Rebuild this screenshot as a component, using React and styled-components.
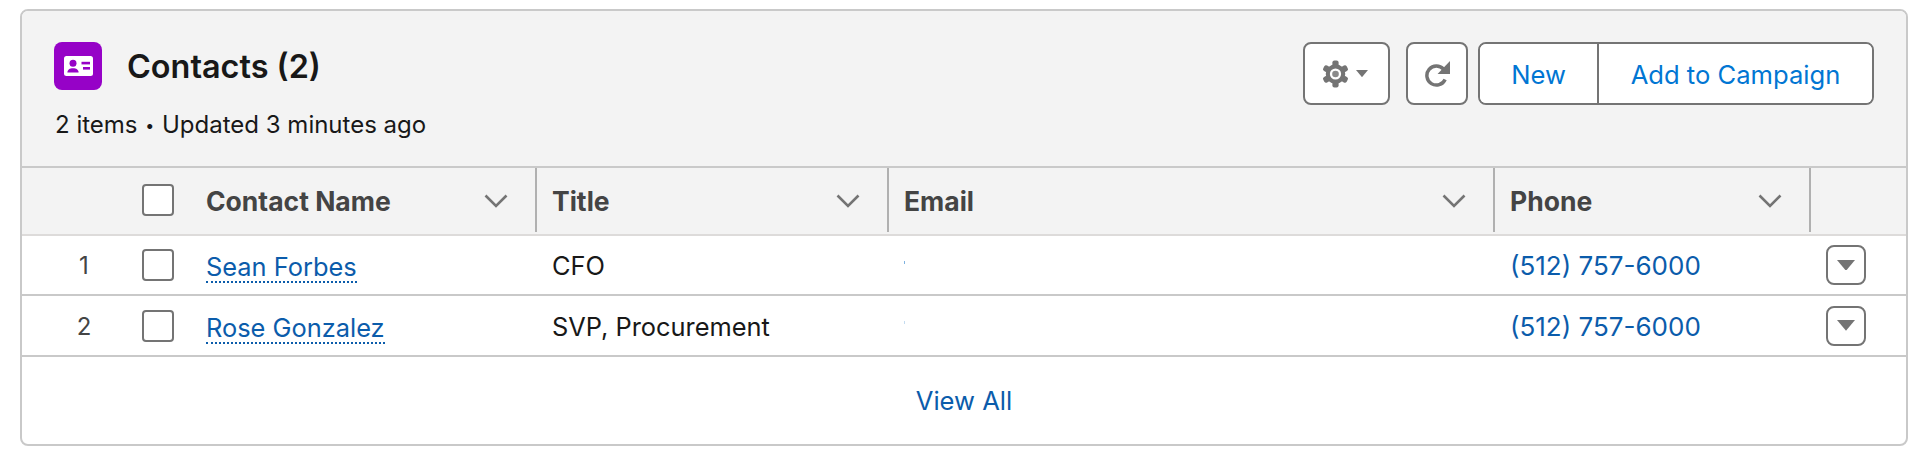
import React from "react";
import styled, { createGlobalStyle } from "styled-components";

const GlobalStyle = createGlobalStyle`
  html, body {
    margin: 0;
    padding: 0;
    background: #fff;
    font-family: Inter, "Liberation Sans", sans-serif;
    color: #181818;
  }
  * { box-sizing: border-box; }
`;

const COLUMNS = "120px 64px 331px 352px 606px 316px 1fr";

const Card = styled.div`
  margin: 9px 14px 0 20px;
  width: 1888px;
  height: 437px;
  border: 2px solid #c9c9c9;
  border-radius: 8px;
  overflow: hidden;
  background: #fff;
  display: flex;
  flex-direction: column;
`;

const CardHeader = styled.header`
  height: 157px;
  flex: none;
  background: #f3f3f3;
  border-bottom: 2px solid #c9c9c9;
  padding: 31px 32px 0 32px;
  display: flex;
  justify-content: space-between;
  align-items: flex-start;
`;

const HeadingBlock = styled.div`
  display: flex;
  flex-direction: column;
`;

const TitleRow = styled.div`
  display: flex;
  align-items: center;
  gap: 25px;
`;

const ObjectIcon = styled.span`
  width: 48px;
  height: 48px;
  border-radius: 8px;
  background: #9602c7;
  display: flex;
  align-items: center;
  justify-content: center;
`;

const Title = styled.h2`
  margin: 2px 0 0;
  font-size: 32.4px;
  line-height: 38px;
  font-weight: 600;
  color: #181818;
`;

const Meta = styled.p`
  margin: 20px 0 0 1px;
  font-size: 24px;
  line-height: 30px;
  font-weight: 400;
  color: #181818;
`;

const MetaDot = styled.span`
  font-size: 16px;
  margin: 0 1px;
  vertical-align: 2px;
`;

const Actions = styled.div`
  display: flex;
  align-items: center;
`;

const IconButton = styled.button`
  height: 63px;
  width: ${(p) => p.$width}px;
  margin-right: ${(p) => p.$gap}px;
  border: 2px solid #747474;
  border-radius: 8px;
  background: #fff;
  padding: 0 ${(p) => p.$padEnd || 0}px 0 0;
  display: flex;
  align-items: center;
  justify-content: center;
  gap: 7px;
  color: #747474;
`;

const ButtonGroup = styled.div`
  display: flex;
  height: 63px;
  border: 2px solid #747474;
  border-radius: 8px;
  background: #fff;
  overflow: hidden;
`;

const GroupButton = styled.button`
  width: ${(p) => p.$width}px;
  border: 0;
  border-left: ${(p) => (p.$divided ? "2px solid #747474" : "0")};
  background: #fff;
  padding: 2px 0 0;
  font-family: inherit;
  font-size: 25.6px;
  font-weight: 400;
  color: #0176d3;
`;

const HeadRow = styled.div`
  display: grid;
  grid-template-columns: ${COLUMNS};
  height: 68px;
  flex: none;
  background: #f3f3f3;
  border-bottom: 2px solid #dddbda;
`;

const HeadCell = styled.div`
  display: flex;
  align-items: center;
  justify-content: space-between;
  height: 64px;
  padding: 2px 27px 0 ${(p) => p.$pad}px;
  border-right: 2px solid #b0b0b0;
  font-size: 26.5px;
  font-weight: 700;
  color: #444444;
`;

const HeadSlot = styled.div`
  display: flex;
  align-items: center;
  height: 64px;
`;

const Row = styled.div`
  display: grid;
  grid-template-columns: ${COLUMNS};
  height: ${(p) => p.$height}px;
  flex: none;
  border-bottom: 2px solid #c9c9c9;
  align-items: center;
`;

const RowNumber = styled.div`
  text-align: center;
  padding: 1px 0 0 4px;
  font-size: 24px;
  color: #444444;
`;

const Checkbox = styled.span`
  display: block;
  width: 32px;
  height: 32px;
  border: 2px solid #747474;
  border-radius: 4px;
  background: #fff;
`;

const NameCell = styled.div`
  display: flex;
  margin-top: 6px;
`;

const NameLink = styled.a`
  color: #0b5cab;
  font-size: 25.4px;
  line-height: 28px;
  text-decoration: none;
  border-bottom: 2px dotted #0b5cab;
`;

const TextCell = styled.div`
  padding: 1px 0 0 ${(p) => p.$pad}px;
  font-size: ${(p) => p.$size}px;
  color: ${(p) => p.$color};
`;

const Speck = styled.span`
  display: block;
  width: 1px;
  height: 3px;
  margin: 0 0 6px 15px;
  background: ${(p) => p.$color};
`;

const RowMenu = styled.button`
  width: 40px;
  height: 40px;
  margin-left: 15px;
  border: 2px solid #747474;
  border-radius: 8px;
  background: #fff;
  padding: 0;
  display: flex;
  align-items: center;
  justify-content: center;
`;

const Footer = styled.div`
  flex: 1;
  display: flex;
  align-items: center;
  justify-content: center;
`;

const ViewAll = styled.a`
  font-size: 25.6px;
  color: #0b5cab;
  text-decoration: none;
`;

const ContactIcon = () => (
  <svg width="29" height="20" viewBox="0 0 29 20">
    <rect width="29" height="20" rx="2.5" fill="#fff" />
    <circle cx="9" cy="7.2" r="3.5" fill="#9602c7" />
    <path d="M3.4 16.5c0-2.9 2.4-4.3 5.6-4.3s5.6 1.4 5.6 4.3z" fill="#9602c7" />
    <rect x="17.5" y="5.8" width="8.5" height="2.6" fill="#9602c7" />
    <rect x="19" y="11" width="7" height="2.6" fill="#9602c7" />
  </svg>
);

const Caret = ({ size = 12 }) => (
  <svg width={size} height={size * 0.6} viewBox="0 0 10 6">
    <path d="M0 0h10L5 6z" fill="#747474" />
  </svg>
);

const GearIcon = () => (
  <svg width="27" height="28" viewBox="-13 -13 26 26">
    {[0, 60, 120, 180, 240, 300].map((a) => (
      <rect key={a} x="-3" y="-13" width="6" height="8" rx="2" fill="#747474" transform={`rotate(${a})`} />
    ))}
    <circle r="9.4" fill="#747474" />
    <circle r="5.4" fill="#fff" />
    <circle r="3.2" fill="#8a8a8a" />
  </svg>
);

const RefreshIcon = () => (
  <svg width="26" height="26" viewBox="0 0 24 24" fill="none">
    <path d="M18 7.5A8.8 8.8 0 1 0 19.5 17" stroke="#747474" strokeWidth="3.2" />
    <path d="M24 0V12H12.5z" fill="#747474" />
  </svg>
);

const Chevron = () => (
  <svg width="24" height="14" viewBox="0 0 24 14" fill="none">
    <path d="M1.5 1.5L12 12L22.5 1.5" stroke="#747474" strokeWidth="2.6" />
  </svg>
);

const contacts = [
  { id: 1, name: "Sean Forbes", title: "CFO", phone: "(512) 757-6000", speck: "#7fb2e0", height: 60 },
  { id: 2, name: "Rose Gonzalez", title: "SVP, Procurement", phone: "(512) 757-6000", speck: "#c5dcf0", height: 61 },
];

export default function App() {
  return (
    <>
      <GlobalStyle />
      <Card>
        <CardHeader>
          <HeadingBlock>
            <TitleRow>
              <ObjectIcon>
                <ContactIcon />
              </ObjectIcon>
              <Title>Contacts (2)</Title>
            </TitleRow>
            <Meta>2 items <MetaDot>•</MetaDot> Updated 3 minutes ago</Meta>
          </HeadingBlock>
          <Actions>
            <IconButton $width={87} $gap={16} $padEnd={4}>
              <GearIcon />
              <Caret />
            </IconButton>
            <IconButton $width={62} $gap={10}>
              <RefreshIcon />
            </IconButton>
            <ButtonGroup>
              <GroupButton $width={117}>New</GroupButton>
              <GroupButton $width={275} $divided>Add to Campaign</GroupButton>
            </ButtonGroup>
          </Actions>
        </CardHeader>

        <HeadRow>
          <HeadSlot />
          <HeadSlot>
            <Checkbox />
          </HeadSlot>
          <HeadCell $pad={0}>
            Contact Name <Chevron />
          </HeadCell>
          <HeadCell $pad={15}>
            Title <Chevron />
          </HeadCell>
          <HeadCell $pad={15}>
            Email <Chevron />
          </HeadCell>
          <HeadCell $pad={15}>
            Phone <Chevron />
          </HeadCell>
          <HeadSlot />
        </HeadRow>

        {contacts.map((c) => (
          <Row key={c.id} $height={c.height}>
            <RowNumber>{c.id}</RowNumber>
            <Checkbox />
            <NameCell>
              <NameLink href="#">{c.name}</NameLink>
            </NameCell>
            <TextCell $pad={15} $size={25.4} $color="#181818">{c.title}</TextCell>
            <Speck $color={c.speck} />
            <TextCell $pad={15} $size={26} $color="#0b5cab">{c.phone}</TextCell>
            <RowMenu>
              <Caret size={18} />
            </RowMenu>
          </Row>
        ))}

        <Footer>
          <ViewAll href="#">View All</ViewAll>
        </Footer>
      </Card>
    </>
  );
}
